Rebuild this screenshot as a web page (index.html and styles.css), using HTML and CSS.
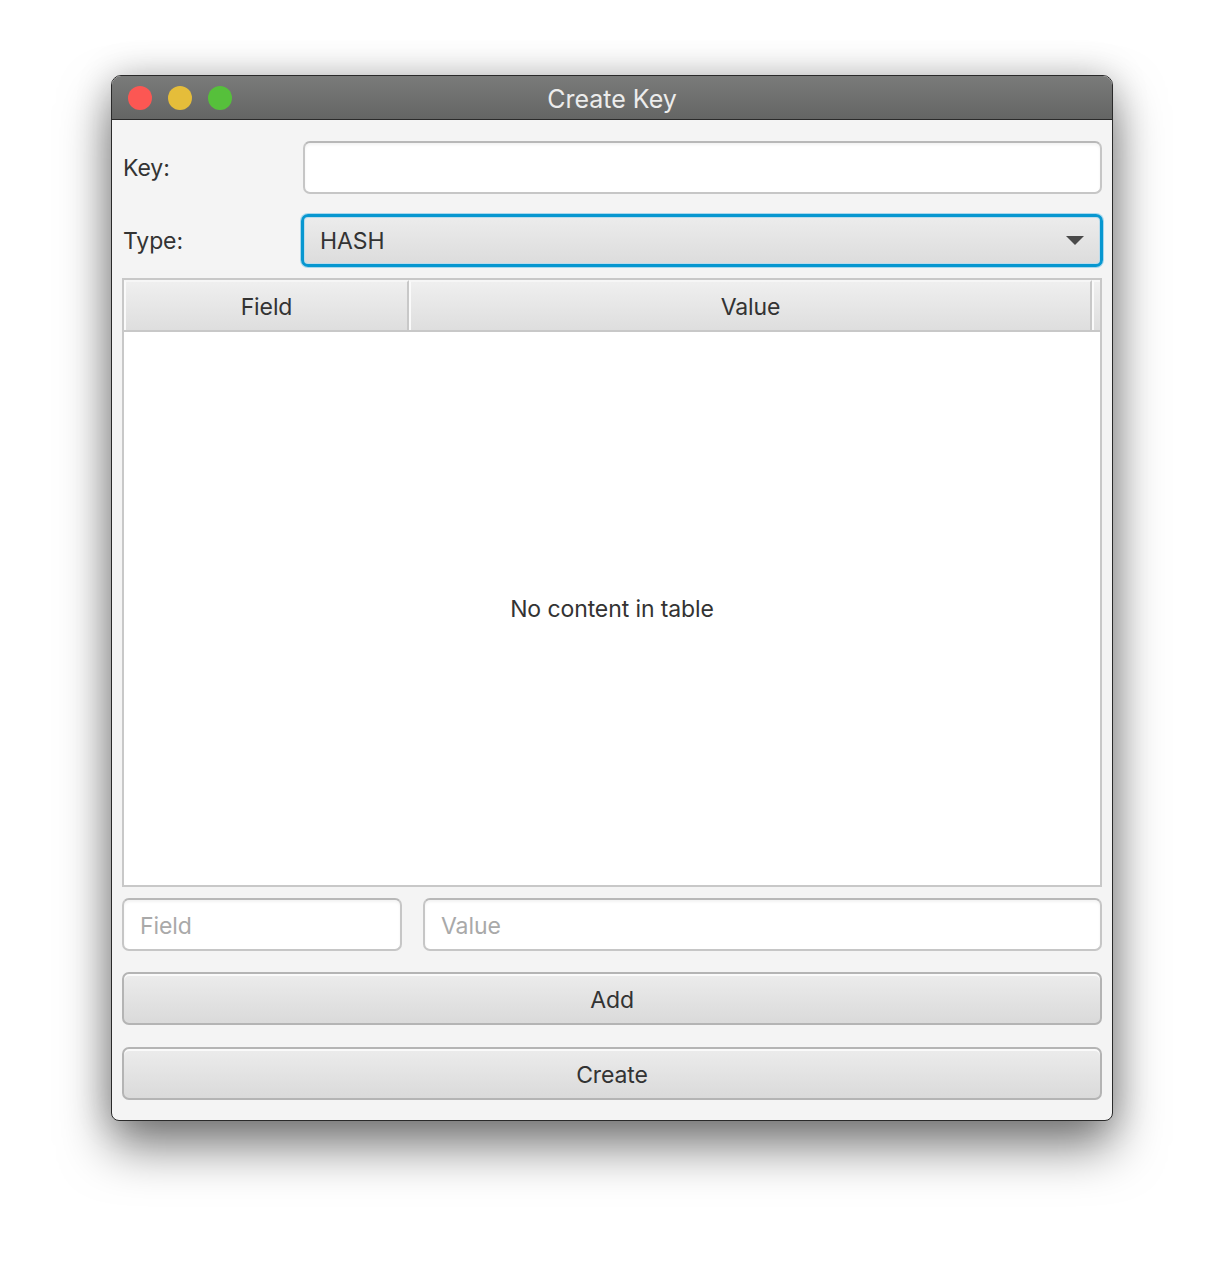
FILE: index.html
```html
<!DOCTYPE html>
<html>
<head>
<meta charset="utf-8">
<link rel="stylesheet" href="styles.css">
</head>
<body>
<div class="window">
  <div class="titlebar">
    <div class="lights">
      <span class="light red"></span>
      <span class="light yellow"></span>
      <span class="light green"></span>
    </div>
    <div class="title">Create Key</div>
  </div>
  <div class="content">
    <div class="form-row">
      <label class="label">Key:</label>
      <div class="textfield"></div>
    </div>
    <div class="form-row type-row">
      <label class="label">Type:</label>
      <div class="combo">
        <span class="combo-text">HASH</span>
        <svg class="arrow" width="18" height="9" viewBox="0 0 18 9"><path d="M0 0 H18 L9 9 Z" fill="#4a4a4a"/></svg>
      </div>
    </div>
    <div class="table">
      <div class="thead">
        <div class="th th-field">Field</div>
        <div class="th th-value">Value</div>
        <div class="th th-filler"></div>
      </div>
      <div class="tbody">No content in table</div>
    </div>
    <div class="inputs-row">
      <div class="textfield small field-in"><span class="placeholder">Field</span></div>
      <div class="textfield small value-in"><span class="placeholder">Value</span></div>
    </div>
    <div class="button add">Add</div>
    <div class="button create">Create</div>
  </div>
</div>
</body>
</html>
```

FILE: styles.css
```css
html, body {
  margin: 0;
  padding: 0;
  background: #ffffff;
}
body {
  width: 1224px;
  height: 1268px;
  padding: 75px 0 0 111px;
  box-sizing: border-box;
  font-family: "Inter", "Liberation Sans", sans-serif;
  color: #333333;
}
.window {
  width: 1002px;
  height: 1046px;
  box-sizing: border-box;
  border: 1px solid #2a2a2a;
  border-radius: 10px 10px 8px 8px;
  background: #f4f4f4;
  box-shadow: 0 26px 50px rgba(0,0,0,0.5), 0 0 36px rgba(0,0,0,0.2);
  overflow: hidden;
  display: flex;
  flex-direction: column;
}
.titlebar {
  height: 44px;
  flex: 0 0 44px;
  box-sizing: border-box;
  border-bottom: 1px solid #2a2a2a;
  background: linear-gradient(#7a7b7a, #646564);
  display: flex;
  align-items: center;
  position: relative;
}
.lights {
  display: flex;
  gap: 16px;
  padding-left: 16px;
}
.light {
  width: 24px;
  height: 24px;
  border-radius: 50%;
  display: block;
}
.red { background: #fc5753; }
.yellow { background: #e5bd3a; }
.green { background: #56c03b; }
.title {
  position: absolute;
  left: 0;
  right: 0;
  top: 0;
  bottom: 0;
  display: flex;
  align-items: center;
  justify-content: center;
  color: #ececec;
  font-size: 25px;
  padding-top: 2px;
}
.content {
  flex: 1;
  padding: 21px 10px 0 10px;
  display: flex;
  flex-direction: column;
  letter-spacing: -0.1px;
}
.form-row {
  display: flex;
  align-items: center;
  height: 53px;
}
.type-row {
  margin-top: 20px;
  height: 53px;
}
.label {
  width: 180px;
  flex: 0 0 180px;
  font-size: 23px;
  padding-left: 1px;
  color: #333;
}
.textfield {
  flex: 1;
  height: 53px;
  box-sizing: border-box;
  background: #fff;
  border: 2px solid #c6c6c6;
  border-top-color: #b8b8b8;
  border-radius: 7px;
  box-shadow: inset 0 2px 3px rgba(0,0,0,0.05);
}
.combo {
  flex: 1;
  height: 53px;
  box-sizing: border-box;
  border: 3px solid #0797d0;
  border-radius: 7px;
  background: linear-gradient(#ececec, #dcdcdc);
  box-shadow: inset 0 0 0 1px #bcdcec, 0 0 0 1px #a8d8ee;
  display: flex;
  align-items: center;
  padding: 1px 16px 0 16px;
  margin-left: -2px;
  margin-right: -1px;
}
.combo-text {
  flex: 1;
  font-size: 23px;
  color: #333;
}
.arrow {
  display: block;
  margin-top: -1px;
}
.table {
  margin-top: 11px;
  height: 609px;
  box-sizing: border-box;
  border: 2px solid #c8c8c8;
  background: #fff;
  display: flex;
  flex-direction: column;
}
.thead {
  display: flex;
  height: 52px;
  flex: 0 0 52px;
  box-sizing: border-box;
  border-bottom: 2px solid #c8c8c8;
}
.th {
  box-sizing: border-box;
  background: linear-gradient(#efefef, #dedede);
  border-left: 2px solid #fafafa;
  border-right: 2px solid #c8c8c8;
  border-top: 2px solid #f6f6f6;
  display: flex;
  align-items: center;
  justify-content: center;
  font-size: 23px;
  color: #333;
  padding-top: 1px;
}
.th-field { width: 285px; }
.th-value { flex: 1; }
.th-filler { width: 8px; border-right: none; }
.tbody {
  flex: 1;
  display: flex;
  align-items: center;
  justify-content: center;
  font-size: 23px;
  color: #333;
  padding-bottom: 0;
}
.inputs-row {
  margin-top: 11px;
  display: flex;
  gap: 21px;
}
.field-in {
  flex: 0 0 280px;
}
.small {
  display: flex;
  align-items: center;
  padding-left: 16px;
  padding-top: 2px;
  height: 53px;
}
.placeholder {
  font-size: 23px;
  color: #a9a9a9;
}
.button {
  height: 53px;
  box-sizing: border-box;
  border: 2px solid #b4b4b4;
  border-radius: 7px;
  background: linear-gradient(#ececec, #dadada);
  box-shadow: inset 0 2px 0 #fafafa;
  display: flex;
  align-items: center;
  justify-content: center;
  font-size: 23px;
  color: #333;
  padding-top: 2px;
}
.add { margin-top: 21px; }
.create { margin-top: 22px; }
```
